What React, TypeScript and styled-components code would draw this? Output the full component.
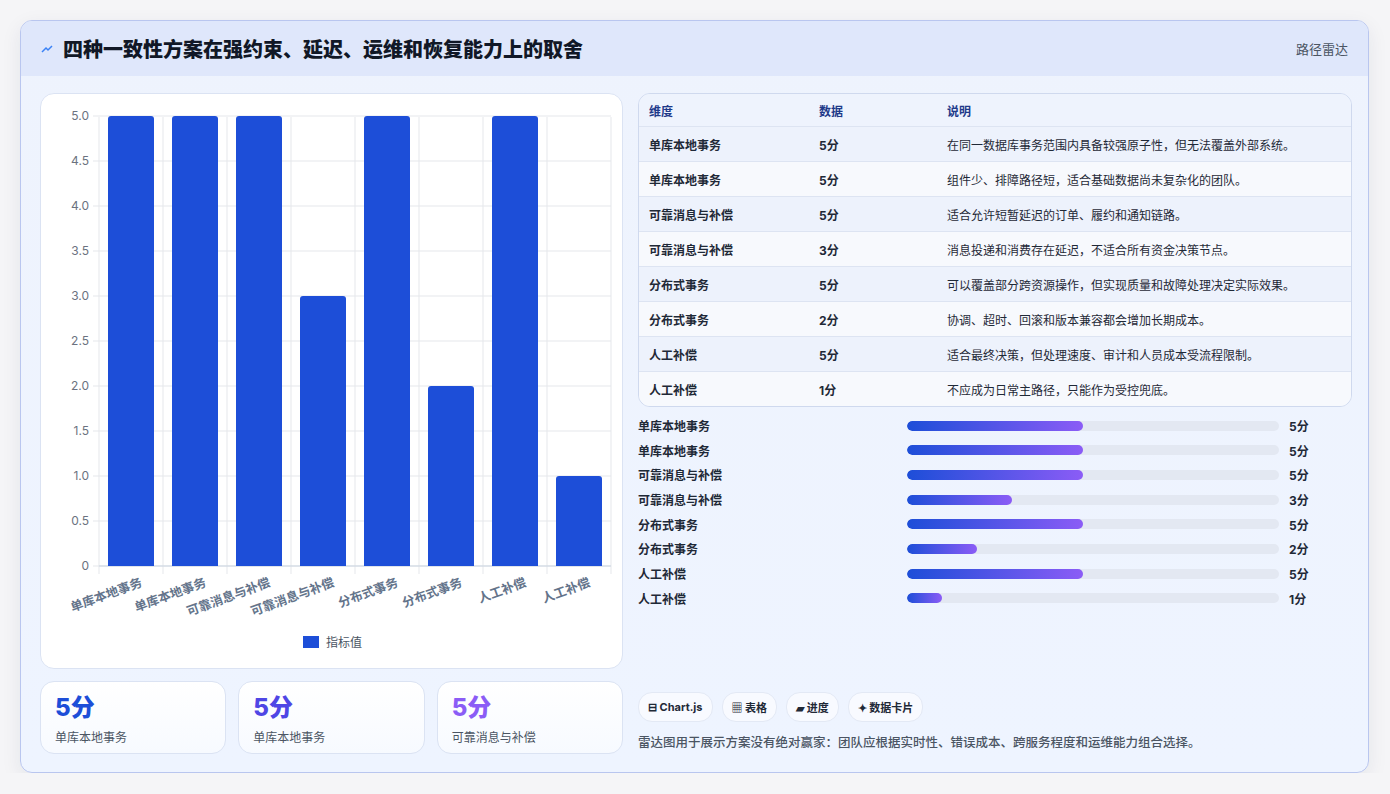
import React from 'react'
import styled, { createGlobalStyle } from 'styled-components'

const Global = createGlobalStyle`
  body { margin: 0; background: #f5f5f7; font-family: Inter, "Noto Sans CJK SC", sans-serif; }
`

const rows = [
  { name: '单库本地事务', v: 5, note: '在同一数据库事务范围内具备较强原子性，但无法覆盖外部系统。' },
  { name: '单库本地事务', v: 5, note: '组件少、排障路径短，适合基础数据尚未复杂化的团队。' },
  { name: '可靠消息与补偿', v: 5, note: '适合允许短暂延迟的订单、履约和通知链路。' },
  { name: '可靠消息与补偿', v: 3, note: '消息投递和消费存在延迟，不适合所有资金决策节点。' },
  { name: '分布式事务', v: 5, note: '可以覆盖部分跨资源操作，但实现质量和故障处理决定实际效果。' },
  { name: '分布式事务', v: 2, note: '协调、超时、回滚和版本兼容都会增加长期成本。' },
  { name: '人工补偿', v: 5, note: '适合最终决策，但处理速度、审计和人员成本受流程限制。' },
  { name: '人工补偿', v: 1, note: '不应成为日常主路径，只能作为受控兜底。' },
]

const Frame = styled.div`
  margin: 20px 20px 0 20px;
  width: 1349px;
  height: 753px;
  box-sizing: border-box;
  border: 1px solid #b9c6ef;
  border-radius: 12px;
  background: linear-gradient(180deg, #eef3fd 0%, #eef4ff 100%);
  overflow: hidden;
  box-shadow: 0 6px 20px rgba(30, 40, 80, 0.08);
`
const Header = styled.div`
  height: 55px;
  display: flex;
  align-items: center;
  justify-content: space-between;
  padding: 0 20px;
  background: #dfe7fb;
`
const Title = styled.h1`
  margin: 0;
  font-size: 20px;
  font-weight: 800;
  color: #111827;
  display: flex;
  align-items: center;
  gap: 10px;
`
const Tag = styled.span`
  font-size: 13px;
  color: #4b5563;
`
const Body = styled.div`
  display: grid;
  grid-template-columns: 583px 714px;
  gap: 15px;
  padding: 17px 19px;
`
const Col = styled.div`
  display: flex;
  flex-direction: column;
  gap: 12px;
`
const ChartCard = styled.div`
  height: 576px;
  background: #fff;
  border: 1px solid #dbe3f3;
  border-radius: 14px;
  box-sizing: border-box;
  overflow: hidden;
`
const Stats = styled.div`
  display: grid;
  grid-template-columns: repeat(3, 1fr);
  gap: 12px;
`
const Stat = styled.div`
  height: 73px;
  box-sizing: border-box;
  padding: 12px 14px;
  background: linear-gradient(180deg, #ffffff, #f7faff);
  border: 1px solid #dbe3f3;
  border-radius: 14px;
`
const StatNum = styled.div<{ $c: string }>`
  font-size: 24px;
  font-weight: 800;
  color: ${(p) => p.$c};
  line-height: 28px;
`
const StatLabel = styled.div`
  margin-top: 6px;
  font-size: 12px;
  color: #4b5563;
`
const Table = styled.div`
  border: 1px solid #cfd9ee;
  border-radius: 12px;
  overflow: hidden;
  font-size: 12px;
  color: #1f2937;
`
const Row = styled.div<{ $bg: string; $h: number }>`
  display: grid;
  grid-template-columns: 170px 128px 1fr;
  align-items: center;
  height: ${(p) => p.$h}px;
  padding: 0 10px;
  background: ${(p) => p.$bg};
  border-bottom: 1px solid #dde4f2;
  &:last-child { border-bottom: none; }
`
const HeadCell = styled.span`
  font-weight: 700;
  color: #1e3a8a;
`
const Bold = styled.span`
  font-weight: 700;
`
const Bars = styled.div`
  display: flex;
  flex-direction: column;
  gap: 8.7px;
  margin-top: 10px;
`
const BarRow = styled.div`
  display: grid;
  grid-template-columns: 259px 372px 1fr;
  align-items: center;
  gap: 10px;
  font-size: 12px;
  font-weight: 700;
  color: #1f2937;
  height: 16px;
`
const Track = styled.div`
  height: 10px;
  border-radius: 5px;
  background: #e3e8f2;
  overflow: hidden;
`
const Fill = styled.div`
  height: 100%;
  border-radius: 5px;
  background: linear-gradient(90deg, #1d4ed8, #8b5cf6);
`
const Chips = styled.div`
  display: flex;
  gap: 9px;
  margin-top: 86px;
`
const Chip = styled.span`
  height: 28px;
  padding: 0 9px;
  display: flex;
  align-items: center;
  gap: 4px;
  background: #f8faff;
  border: 1px solid #e3e9f5;
  border-radius: 14px;
  font-size: 11px;
  font-weight: 700;
  color: #1f2937;
`
const Note = styled.p`
  margin: 10px 0 0;
  font-size: 12.5px;
  font-weight: 500;
  color: #4b5563;
`

const Chart = () => {
  const x0 = 58, y0 = 472, step = 90, cw = 64
  const ticks = [0, 0.5, 1, 1.5, 2, 2.5, 3, 3.5, 4, 4.5, 5]
  return (
    <svg width="582" height="576" fontFamily="Inter, 'Noto Sans CJK SC', sans-serif">
      {ticks.map((t) => {
        const y = y0 - t * step
        return (
          <g key={t}>
            <line x1={x0 - 6} x2={570} y1={y} y2={y} stroke="#e5e7eb" />
            <text x={x0 - 10} y={y + 4} fontSize="12" fill="#6b7280" textAnchor="end">{t === 0 ? '0' : t.toFixed(1)}</text>
          </g>
        )
      })}
      {Array.from({ length: 9 }).map((_, i) => (
        <line key={i} x1={x0 + i * cw} x2={x0 + i * cw} y1={23} y2={y0 + 8} stroke="#e5e7eb" />
      ))}
      <line x1={x0} x2={570} y1={y0} y2={y0} stroke="#cbd5e1" />
      {rows.map((r, i) => {
        const h = r.v * step
        const x = x0 + i * cw + 9
        return (
          <g key={i}>
            <path d={`M${x} ${y0} V${y0 - h + 3} Q${x} ${y0 - h} ${x + 3} ${y0 - h} H${x + 43} Q${x + 46} ${y0 - h} ${x + 46} ${y0 - h + 3} V${y0} Z`} fill="#1d4ed8" />
            <text transform={`translate(${x0 + i * cw + 44} ${y0 + 20}) rotate(-20)`} fontSize="12.5" fontWeight="700" fill="#64748b" textAnchor="end">{r.name}</text>
          </g>
        )
      })}
      <rect x={262} y={542} width={16} height={12} fill="#1d4ed8" />
      <text x={285} y={553} fontSize="12" fill="#4b5563">指标值</text>
    </svg>
  )
}

export default function App() {
  return (
    <>
      <Global />
      <Frame>
        <Header>
          <Title>
            <svg width="12" height="10" viewBox="0 0 12 10"><path d="M1 8 L5 4 L7 6 L11 2" stroke="#3b82f6" strokeWidth="1.5" fill="none" /></svg>
            四种一致性方案在强约束、延迟、运维和恢复能力上的取舍
          </Title>
          <Tag>路径雷达</Tag>
        </Header>
        <Body>
          <Col>
            <ChartCard><Chart /></ChartCard>
            <Stats>
              <Stat><StatNum $c="#1d4ed8">5分</StatNum><StatLabel>单库本地事务</StatLabel></Stat>
              <Stat><StatNum $c="#4f46e5">5分</StatNum><StatLabel>单库本地事务</StatLabel></Stat>
              <Stat><StatNum $c="#8b5cf6">5分</StatNum><StatLabel>可靠消息与补偿</StatLabel></Stat>
            </Stats>
          </Col>
          <Col style={{ gap: 0 }}>
            <Table>
              <Row $bg="#eef3fd" $h={32}><HeadCell>维度</HeadCell><HeadCell>数据</HeadCell><HeadCell>说明</HeadCell></Row>
              {rows.map((r, i) => (
                <Row key={i} $bg={i % 2 ? '#f7f9fd' : '#edf2fc'} $h={34}>
                  <Bold>{r.name}</Bold><Bold>{r.v}分</Bold><span>{r.note}</span>
                </Row>
              ))}
            </Table>
            <Bars>
              {rows.map((r, i) => (
                <BarRow key={i}>
                  <span>{r.name}</span>
                  <Track><Fill style={{ width: `${r.v * 9.45}%` }} /></Track>
                  <span>{r.v}分</span>
                </BarRow>
              ))}
            </Bars>
            <Chips>
              <Chip>⊟ Chart.js</Chip>
              <Chip>▦ 表格</Chip>
              <Chip>▰ 进度</Chip>
              <Chip>✦ 数据卡片</Chip>
            </Chips>
            <Note>雷达图用于展示方案没有绝对赢家：团队应根据实时性、错误成本、跨服务程度和运维能力组合选择。</Note>
          </Col>
        </Body>
      </Frame>
    </>
  )
}
